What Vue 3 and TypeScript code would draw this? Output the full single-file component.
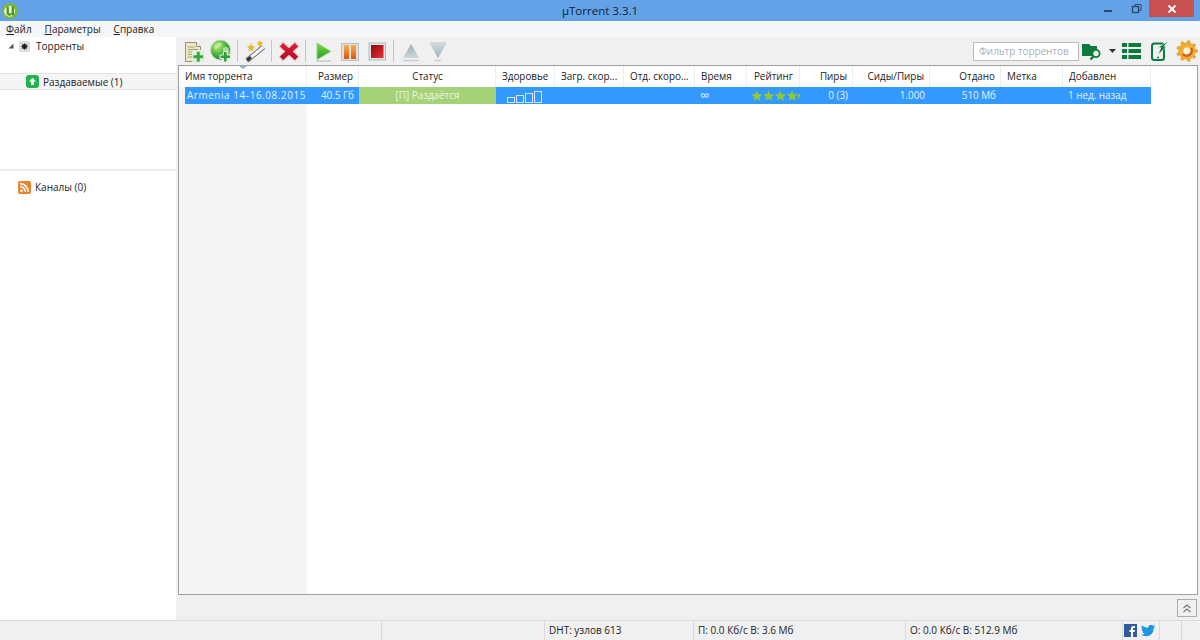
<script setup lang="ts">
interface Col { title: string; align: string }
const cols: Col[] = [
  { title: 'Имя торрента', align: 'left' },
  { title: 'Размер', align: 'right' },
  { title: 'Статус', align: 'center' },
  { title: 'Здоровье', align: 'left' },
  { title: 'Загр. скор...', align: 'left' },
  { title: 'Отд. скоро...', align: 'left' },
  { title: 'Время', align: 'left' },
  { title: 'Рейтинг', align: 'center' },
  { title: 'Пиры', align: 'right' },
  { title: 'Сиды/Пиры', align: 'right' },
  { title: 'Отдано', align: 'right' },
  { title: 'Метка', align: 'left' },
  { title: 'Добавлен', align: 'left' },
]
const menu = [
  { u: 'Ф', r: 'айл' },
  { u: 'П', r: 'араметры' },
  { u: 'С', r: 'правка' },
]
const starPath = 'M6 .5l1.600 3.700 4 .4-3 2.700.9 3.900L6 8.700 2.500 10.700l.9-3.900-3-2.700 4-.4z'
const starX = [0, 12, 24, 36]

// toothed gear outline for the settings icon
const gearPath = (() => {
  const pts: string[] = []
  const teeth = 9
  for (let i = 0; i < teeth; i++) {
    const a = (i / teeth) * Math.PI * 2
    const step = (Math.PI * 2) / teeth
    const p = (r: number, t: number) =>
      `${(11 + r * Math.cos(t)).toFixed(2)} ${(11 + r * Math.sin(t)).toFixed(2)}`
    pts.push(p(8.4, a - step * 0.5), p(8.4, a - step * 0.3), p(10.6, a - step * 0.16), p(10.6, a + step * 0.16), p(8.4, a + step * 0.3))
  }
  return `M${pts.join('L')}Z`
})()
</script>

<template>
  <div class="win">
    <header class="title">
      <svg class="logo" width="16" height="16" viewBox="0 0 16 16"><circle cx="8" cy="8" r="7.800" fill="#7dbb2e"/><circle cx="7.600" cy="8.300" r="5.400" fill="#f2f8e8"/><path d="M4.500 3.500h2.400v5.500q0 1.500 1.300 1.500t1.400-1.200V3.500h2.400V12.500H9.800v-.9Q8.900 12.800 7.300 12.800 4.500 12.800 4.500 9.800z" fill="#4e9a20"/></svg>
      <span class="title-text">µTorrent 3.3.1</span>
      <div class="win-btns">
        <svg class="wb" width="28" height="20" viewBox="0 0 28 20"><rect x="9" y="10" width="8" height="2" fill="#2c4a6e"/></svg>
        <svg class="wb" width="26" height="20" viewBox="0 0 26 20"><rect x="9.500" y="6.500" width="6" height="6" fill="none" stroke="#2c4a6e" stroke-width="1.400"/><path d="M12 6V4.500h6v6h-2" fill="none" stroke="#2c4a6e"/></svg>
        <div class="close"><svg width="10" height="10" viewBox="0 0 10 10"><path d="M1.500 1.500l7 7M8.500 1.500l-7 7" stroke="#fff" stroke-width="1.800"/></svg></div>
      </div>
    </header>

    <nav class="menu">
      <span v-for="m in menu" :key="m.u" class="menu-item"><u>{{ m.u }}</u>{{ m.r }}</span>
    </nav>

    <div class="body">
      <aside class="side">
        <div class="tree-top">
          <svg width="6" height="6" viewBox="0 0 6 6" class="twist"><path d="M5.500 .5v5h-5z" fill="#555"/></svg>
          <span class="chip-ico"><svg width="7" height="7" viewBox="0 0 7 7"><path d="M3.500 0l.8 1.400L5.900 1l-.4 1.600L7 3.500l-1.500.9.400 1.600-1.600-.4-.8 1.400-.8-1.400-1.600.4.400-1.600L0 3.500l1.500-.9L1.100 1l1.600.4z" fill="#1c1c1c"/></svg></span>
          <span>Торренты</span>
        </div>
        <div class="seed-row">
          <svg width="13" height="13" viewBox="0 0 13 13"><rect width="13" height="13" rx="3" fill="#22b24c"/><path d="M6.500 2.800l3.600 3.700H8V10H5V6.500H2.900z" fill="#fff"/></svg>
          <span>Раздаваемые (1)</span>
        </div>
        <div class="side-div"></div>
        <div class="feeds">
          <svg width="13" height="13" viewBox="0 0 13 13"><rect width="13" height="13" rx="2" fill="#e8832a"/><circle cx="3.400" cy="9.800" r="1.400" fill="#fff"/><path d="M2 5.600a5.400 5.400 0 0 1 5.400 5.400M2 2.600A8.400 8.400 0 0 1 10.400 11" fill="none" stroke="#fff" stroke-width="1.600"/></svg>
          <span>Каналы (0)</span>
        </div>
      </aside>

      <main class="main">
        <svg class="defs" width="0" height="0">
          <defs>
            <linearGradient id="gPlay" x1="0" y1="0" x2="0" y2="1"><stop offset="0" stop-color="#7fd93a"/><stop offset="1" stop-color="#1c9e2a"/></linearGradient>
            <linearGradient id="gOrange" x1="0" y1="0" x2="0" y2="1"><stop offset="0" stop-color="#f6b052"/><stop offset="1" stop-color="#d9540f"/></linearGradient>
            <linearGradient id="gRed" x1="1" y1="1" x2="0" y2="0"><stop offset="0" stop-color="#ee3030"/><stop offset="1" stop-color="#8c0a10"/></linearGradient>
            <linearGradient id="gGrey" x1="0" y1="0" x2="0" y2="1"><stop offset="0" stop-color="#94aeb4"/><stop offset="1" stop-color="#cdd9db"/></linearGradient>
            <linearGradient id="gGrey2" x1="0" y1="0" x2="0" y2="1"><stop offset="0" stop-color="#cdd9db"/><stop offset="1" stop-color="#9ab3b8"/></linearGradient>
            <radialGradient id="gGlobe" cx=".35" cy=".3" r=".8"><stop offset="0" stop-color="#b8ec7a"/><stop offset=".6" stop-color="#3fae38"/><stop offset="1" stop-color="#0f7a2c"/></radialGradient>
            <radialGradient id="gGear" cx=".5" cy=".5" r=".6"><stop offset="0" stop-color="#f9c84a"/><stop offset="1" stop-color="#ec8f1d"/></radialGradient>
            <linearGradient id="gX" x1="0" y1="0" x2="0" y2="1"><stop offset="0" stop-color="#e3203a"/><stop offset="1" stop-color="#a90d22"/></linearGradient>
          </defs>
        </svg>
        <div class="toolbar">
          <svg class="tb" width="22" height="24" viewBox="0 0 22 24"><path d="M2.500 3.500h11l4 4v15h-15z" fill="#ece6c2" stroke="#8f917f"/><path d="M13.500 3.500v4h4" fill="#fff" stroke="#8f917f"/><path d="M5 8h7M5 10.500h10M5 13h5M5 15.500h4M5 18h4" stroke="#a8a27c"/><rect x="9" y="11" width="12.500" height="12.500" rx="2" fill="#dff0da"/><path d="M13.500 12.500h3.500v3.500h3.500v3.500H17V23h-3.500v-3.500H10V16h3.500z" fill="#35a83a" stroke="#e8f6e4" stroke-width=".6"/></svg>
          <svg class="tb" width="22" height="24" viewBox="0 0 22 24"><circle cx="10.500" cy="11" r="10" fill="url(#gGlobe)" stroke="#c7dbc2"/><path d="M4 7q4-4 7-3t-2 4-3 4zM13 9q5-3 6 2t-3 5q-3-2-3-7" fill="#c8eea8" opacity=".75"/><path d="M13.500 12.500h3.500V16h3.500v3.500H17V23h-3.500v-3.500H10V16h3.500z" fill="#2f9e36" stroke="#e8f5e2"/></svg>
          <i class="sep"></i>
          <svg class="tb" width="22" height="24" viewBox="0 0 22 24"><path d="M3 21.500L19.500 8" stroke="#6b7480" stroke-width="5"/><path d="M3 21.500L19.500 8" stroke="#f6f6f6" stroke-width="3"/><path d="M3 21.500l4-3.300" stroke="#333" stroke-width="3"/><path d="M7 4l1.200 3 3 .5-2.300 2 .6 3L7 11l-2.500 1.500.6-3-2.300-2 3-.5z" fill="#e9b62c"/><path d="M16 1l1 2.300 2.400.3-1.800 1.600.5 2.400-2.100-1.200-2.100 1.200.5-2.400-1.800-1.600 2.400-.3z" fill="#efb81f"/></svg>
          <i class="sep"></i>
          <svg class="tb" width="22" height="24" viewBox="0 0 22 24"><path d="M5 3l6 5.500L17 3l4 4.500-5.500 5L21 17.500 17 22l-6-5.500L5 22l-4-4.500 5.500-5L1 7.500z" fill="url(#gX)" stroke="#e9cdd0" stroke-width="1.200"/></svg>
          <i class="sep"></i>
          <svg class="tb" width="22" height="24" viewBox="0 0 22 24"><path d="M5 4l14 8.500L5 20.500z" fill="url(#gPlay)" stroke="#9bd08a"/><path d="M4 22h15" stroke="#b9c9c9" stroke-width="1.400"/></svg>
          <svg class="tb" width="22" height="24" viewBox="0 0 22 24"><rect x="2.500" y="4.500" width="17" height="17" fill="#e3e0da" stroke="#b3c2c6"/><rect x="5" y="6" width="5" height="14" fill="url(#gOrange)"/><rect x="12" y="6" width="5" height="14" fill="url(#gOrange)"/></svg>
          <svg class="tb" width="22" height="24" viewBox="0 0 22 24"><rect x="3" y="4" width="16.500" height="17" fill="#e4e6e8" stroke="#aebcc2"/><rect x="5" y="6" width="12.500" height="13" fill="url(#gRed)"/></svg>
          <i class="sep"></i>
          <svg class="tb" width="22" height="24" viewBox="0 0 22 24"><path d="M11 5l8 14H3z" fill="url(#gGrey)"/><path d="M3 21.500h16" stroke="#c3d0d2" stroke-width="1.400"/></svg>
          <svg class="tb" width="22" height="24" viewBox="0 0 22 24"><path d="M3 5h16l-8 14z" fill="url(#gGrey2)"/><path d="M3 4h16" stroke="#c3d0d2" stroke-width="1.400"/><path d="M8 21.500h6" stroke="#c3d0d2" stroke-width="1.400"/></svg>
          <div class="tb-right">
            <div class="filter">Фильтр торрентов</div>
            <svg width="20" height="20" viewBox="0 0 20 20"><path d="M0 3h7l2 2h6v4l-4 2-1 4H0z" fill="#0c7a3a"/><circle cx="14" cy="12.500" r="3.600" fill="#f0f0f0" stroke="#0c7a3a" stroke-width="1.800"/><path d="M11.300 15.500L8.500 18.500" stroke="#0c7a3a" stroke-width="2.400"/></svg>
            <svg class="caret" width="7" height="4" viewBox="0 0 7 4"><path d="M0 0h7L3.500 4z" fill="#333"/></svg>
            <svg class="ic-list" width="19" height="16" viewBox="0 0 19 16"><g fill="#0c7a3a"><rect width="5" height="4"/><rect x="6.500" width="12.500" height="4"/><rect y="6" width="5" height="4"/><rect x="6.500" y="6" width="12.500" height="4"/><rect y="12" width="5" height="4"/><rect x="6.500" y="12" width="12.500" height="4"/></g></svg>
            <svg class="ic-phone" width="18" height="20" viewBox="0 0 18 20"><rect x="1" y="2.500" width="12" height="16.500" rx="2.500" fill="#f0f0f0" stroke="#0c7a3a" stroke-width="2"/><path d="M6 16.500h2" stroke="#0c7a3a" stroke-width="1.500"/><path d="M18 0L7.500 6l2.500.8-3 6.700 8-7-2.500-1z" fill="#0c7a3a" stroke="#f0f0f0" stroke-width=".6"/></svg>
            <svg class="ic-gear" width="22" height="22" viewBox="0 0 22 22"><path :d="gearPath" fill="url(#gGear)" stroke="#e6b85a" stroke-width=".6"/><circle cx="11" cy="11" r="3.600" fill="#fff6de"/><path d="M6.800 14a5.200 5.200 0 0 0 8.400-6" stroke="#d4601a" stroke-width="2.400" fill="none"/></svg>
          </div>
        </div>

        <div class="table">
          <i class="sort"></i>
          <div class="thead">
            <div v-for="c in cols" :key="c.title" class="th" :class="c.align">{{ c.title }}</div>
          </div>
          <div class="rows">
            <div class="name-strip"></div>
            <div class="trow">
              <div class="td left name">Armenia 14-16.08.2015</div>
              <div class="td right">40.5 Гб</div>
              <div class="td status">[П] Раздаётся</div>
              <div class="td health">
                <i class="hb h1"></i><i class="hb h2"></i><i class="hb h3"></i><i class="hb h4"></i>
              </div>
              <div class="td"></div>
              <div class="td"></div>
              <div class="td left time">∞</div>
              <div class="td stars">
                <svg width="50" height="13" viewBox="0 0 50 13">
                  <path v-for="x in starX" :key="x" :d="starPath" :transform="`translate(${x} 1)`" fill="#8fc63c"/>
                  <path d="M48 5l2 .2v1.500l-.8 .7.600 2.800L48 9z" fill="#8fc63c"/>
                </svg>
              </div>
              <div class="td right">0 (3)</div>
              <div class="td right">1.000</div>
              <div class="td right">510 Мб</div>
              <div class="td"></div>
              <div class="td left">1 нед. назад</div>
            </div>
          </div>
        </div>

        <div class="lower">
          <div class="expand"><svg width="10" height="10" viewBox="0 0 10 10"><path d="M1.500 5l3.500-3 3.500 3M1.500 9l3.500-3 3.500 3" fill="none" stroke="#777" stroke-width="1.200"/></svg></div>
        </div>
      </main>
    </div>

    <footer class="status-bar">
      <div class="sb s1"></div>
      <div class="sb s2"></div>
      <div class="sb s3">DHT: узлов 613</div>
      <div class="sb s4">П: 0.0 Кб/с В: 3.6 Мб</div>
      <div class="sb s5">О: 0.0 Кб/с В: 512.9 Мб</div>
      <div class="sb s6">
        <svg width="13" height="13" viewBox="0 0 13 13"><rect width="13" height="13" fill="#2f5b9b"/><path d="M9 13V8h1.700l.3-2H9V5q0-1 1-1h1V2.200Q7 1.500 7 4.500V6H5.500v2H7v5z" fill="#fff"/></svg>
        <svg width="14" height="12" viewBox="0 0 14 12"><path d="M14 1.500l-1.500.4Q13.500 1.300 13.800 0l-1.700.7Q10.500-.8 8.500.3 6.800 1.500 7.100 3 4 3 1 .6q-1 2 .6 3.900L.5 4.200Q.6 6 2.500 6.800H1.300Q1.900 8.300 3.700 8.600 2 9.900 0 9.800q4 2.500 8.500.8 4-2 4.200-7.500.8-.6 1.300-1.600z" fill="#1b95e0"/></svg>
      </div>
      <div class="sb s7"></div>
      <div class="sb s8"></div>
    </footer>
  </div>
</template>

<style scoped>
.win {
  width: 1200px;
  height: 640px;
  display: flex;
  flex-direction: column;
  overflow: hidden;
  background: #f0f0f0;
  font-family: "Open Sans", "Noto Sans", sans-serif;
  font-size: 9.9px;
  color: #222;
}
.title {
  height: 21px;
  flex: none;
  background: #63a2e6;
  display: flex;
  align-items: center;
  position: relative;
}
.logo { margin-left: 2px; }
.title-text {
  position: absolute;
  left: 0;
  right: 0;
  text-align: center;
  font-size: 11.500px;
  color: #10233a;
}
.win-btns {
  margin-left: auto;
  margin-right: 6px;
  display: flex;
  align-items: flex-start;
  align-self: flex-start;
  position: relative;
}
.close {
  width: 45px;
  height: 17px;
  background: #c75050;
  display: flex;
  align-items: center;
  justify-content: center;
}
.menu {
  height: 16px;
  flex: none;
  background: #f5f6f7;
  display: flex;
  align-items: center;
  padding-left: 6px;
  gap: 13px;
  font-size: 10px;
}
.menu-item { color: #222; }
.body {
  flex: 1;
  display: flex;
  min-height: 0;
}
.side {
  width: 176px;
  flex: none;
  background: #fff;
  display: flex;
  flex-direction: column;
  border-right: 2px solid #f0f0f0;
  font-size: 10px;
}
.tree-top {
  height: 18px;
  display: flex;
  align-items: center;
  padding-left: 8px;
}
.twist { margin-right: 5px; }
.chip-ico {
  width: 11px;
  height: 11px;
  background: #dcdcdc;
  border-radius: 2px;
  display: flex;
  align-items: center;
  justify-content: center;
  margin-right: 6px;
}
.seed-row {
  height: 17px;
  margin-top: 18px;
  box-sizing: border-box;
  background: #f5f5f5;
  border-top: 1px solid #e4e4e4;
  border-bottom: 1px solid #e4e4e4;
  display: flex;
  align-items: center;
  gap: 4px;
  padding-left: 26px;
}
.side-div {
  height: 2px;
  background: #eeeeee;
  margin-top: 79px;
}
.feeds {
  margin-top: 7px;
  height: 18px;
  display: flex;
  align-items: center;
  gap: 4px;
  padding-left: 18px;
}
.main {
  flex: 1;
  display: flex;
  flex-direction: column;
  min-width: 0;
}
.defs { position: absolute; }
.toolbar {
  height: 28px;
  flex: none;
  background: #f0f0f0;
  display: flex;
  align-items: center;
  padding-left: 5px;
}
.tb { margin-right: 5px; flex: none; }
.sep {
  width: 1px;
  height: 22px;
  background: #c4c4c4;
  margin: 0 6px 0 0;
  flex: none;
}
.tb-right {
  margin-left: auto;
  display: flex;
  align-items: center;
  margin-right: 2px;
}
.filter {
  width: 106px;
  height: 19px;
  box-sizing: border-box;
  background: #fff;
  border: 1px solid #bcbcbc;
  color: #a8b0bc;
  padding-left: 5px;
  line-height: 16px;
  margin-right: 3px;
}
.caret { margin: 0 6px 0 7px; }
.ic-list { margin-right: 10px; }
.ic-phone { margin-right: 7px; }
.table {
  height: 530px;
  flex: none;
  width: 1020px;
  box-sizing: border-box;
  background: #fff;
  border: 1px solid #a0a0a0;
  position: relative;
  display: flex;
  flex-direction: column;
}
.sort {
  position: absolute;
  left: 60px;
  top: 0;
  border-left: 4px solid transparent;
  border-right: 4px solid transparent;
  border-top: 3px solid #8ab4d8;
}
.thead, .trow {
  display: grid;
  grid-template-columns: 128px 52px 137px 59px 69px 71px 52px 53px 53px 77px 71px 62px 88px;
}
.thead { height: 21px; flex: none; }
.th {
  border-right: 1px solid #e8eef5;
  padding: 0 5px 0 6px;
  line-height: 21px;
  white-space: nowrap;
  overflow: hidden;
}
.left { text-align: left; }
.right { text-align: right; }
.center { text-align: center; }
.rows {
  flex: 1;
  position: relative;
  background: #fff;
}
.name-strip {
  position: absolute;
  left: 0;
  top: 0;
  bottom: 0;
  width: 128px;
  background: #f5f5f5;
}
.trow {
  position: relative;
  height: 17px;
  background: #3399ff;
  color: #e6f2ff;
  margin-left: 6px;
  width: 966px;
  grid-template-columns: 122px 52px 137px 59px 69px 71px 52px 53px 53px 77px 71px 62px 88px;
}
.td {
  line-height: 17px;
  padding: 0 5px;
  white-space: nowrap;
  overflow: hidden;
}
.td.name { padding-left: 2px; letter-spacing: .6px; }
.td.status {
  background: #a5d277;
  color: #eef6e2;
  text-align: center;
  padding: 0;
}
.health {
  display: flex;
  align-items: flex-end;
  gap: 1px;
  padding: 0 0 1px 11px;
}
.hb {
  display: block;
  box-sizing: border-box;
  border: 1px solid #d5e8ff;
  flex: none;
  width: 8px;
}
.h1 { height: 6px; }
.h2 { height: 8px; }
.h3 { height: 10px; }
.h4 { height: 12px; }
.time { padding-left: 5px; font-size: 13px; }
.stars {
  padding: 0 0 0 4px;
  display: flex;
  align-items: center;
}
.lower {
  flex: 1;
  display: flex;
  justify-content: flex-end;
  align-items: flex-start;
  padding: 4px 3px 0 0;
}
.expand {
  width: 20px;
  height: 18px;
  box-sizing: border-box;
  border: 1px solid #acacac;
  display: flex;
  align-items: center;
  justify-content: center;
}
.status-bar {
  height: 20px;
  flex: none;
  box-sizing: border-box;
  border-top: 1px solid #dcdcdc;
  display: grid;
  grid-template-columns: 382px 163px 149px 212px 217px 37px 22px 18px;
  font-size: 10px;
  align-items: stretch;
}
.sb {
  border-right: 1px solid #d9d9d9;
  padding-left: 4px;
  line-height: 19px;
  white-space: nowrap;
}
.s6 {
  display: flex;
  align-items: center;
  gap: 4px;
  padding-left: 1px;
}
.s8 { border-right: 0; }
</style>
